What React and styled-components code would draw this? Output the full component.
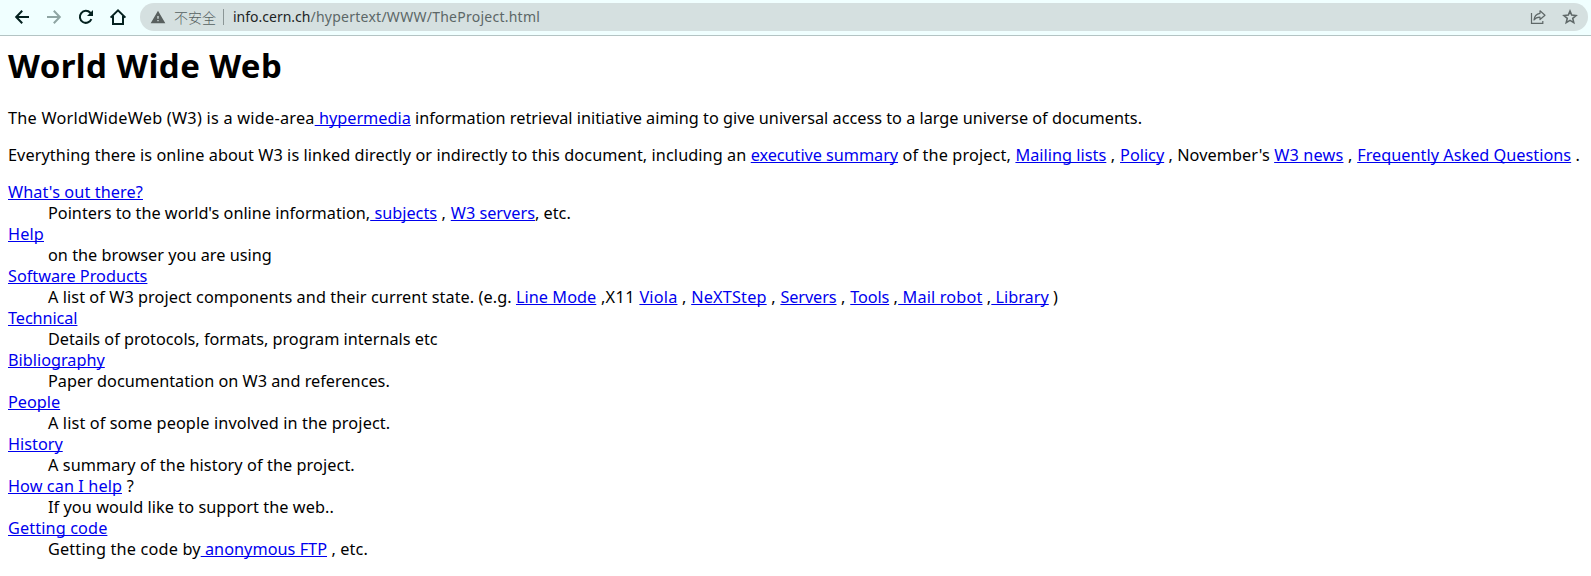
import React from "react";
import styled, { createGlobalStyle } from "styled-components";

const GlobalStyle = createGlobalStyle`
  body {
    margin: 0;
    background: #fff;
    color: #000;
    font-family: "Noto Sans", "Noto Sans CJK SC", sans-serif;
  }
`;

const Window = styled.div`
  height: 576px;
  overflow: hidden;
`;

const Toolbar = styled.header`
  box-sizing: border-box;
  height: 36px;
  display: flex;
  align-items: center;
  gap: 12px;
  padding: 0 3px 1px 12px;
  background: #f0ffff;
  border-bottom: 1px solid #b4c4c4;
`;

const NavIcon = styled.svg`
  flex: none;
  width: 20px;
  height: 20px;
  fill: none;
  stroke: ${(p) => (p.$disabled ? "#8fa5a3" : "#04211f")};
  stroke-width: 2;
`;

const AddressBar = styled.div`
  box-sizing: border-box;
  flex: 1;
  height: 28px;
  display: flex;
  align-items: center;
  padding: 0 10px;
  border-radius: 14px;
  background: #d5e0e0;
  font-size: 14px;
  line-height: 20px;
`;

const BarIcon = styled.svg`
  flex: none;
  width: 16px;
  height: 16px;
  margin-left: ${(p) => p.$before || 0}px;
`;

const Security = styled.span`
  margin-left: 8px;
  color: #566060;
  font-family: "Noto Sans CJK SC", sans-serif;
  font-weight: 300;
`;

const Divider = styled.span`
  width: 1px;
  height: 16px;
  margin: 0 9px 0 7px;
  background: #8b9696;
`;

const Url = styled.span`
  flex: 1;
  color: #1c2424;
`;

const UrlPath = styled.span`
  color: #5c6767;
  letter-spacing: 0.25px;
`;

const Page = styled.main`
  padding: 8px 8px 0;
  font-size: 16.25px;
  line-height: 21px;
  white-space: pre;
`;

const Title = styled.h1`
  margin: 0 0 21px;
  font-size: 33px;
  line-height: 43px;
  font-weight: 700;
  letter-spacing: ${(p) => p.$track}px;
`;

const Paragraph = styled.p`
  margin: 0 0 16px;
`;

const Topics = styled.dl`
  margin: 0;
`;

const Term = styled.dt``;

const Detail = styled.dd`
  margin: 0 0 0 40px;
`;

const Text = styled.span`
  letter-spacing: ${(p) => p.$track || 0}px;
`;

const Link = styled.a`
  color: #0000ee;
  letter-spacing: ${(p) => p.$track || 0}px;
  text-decoration: underline;
  text-decoration-thickness: 1px;
  text-underline-offset: 1px;
  text-decoration-skip-ink: none;
  cursor: pointer;
`;

const Comma = () => <Text $track={0.3}>{" , "}</Text>;

export default function App() {
  return (
    <Window>
      <GlobalStyle />
      <Toolbar>
        <NavIcon viewBox="0 0 20 20">
          <path d="M17 10H4.5M10.2 3.8L4.2 10l6 6.2" />
        </NavIcon>
        <NavIcon viewBox="0 0 20 20" $disabled>
          <path d="M3 10h12.5M9.8 3.8l6 6.2-6 6.2" />
        </NavIcon>
        <NavIcon viewBox="0 0 20 20">
          <path d="M15.4 12.2A6 6 0 1 1 14.3 5.8L15.6 7.1" />
          <path d="M17 3v6h-6z" fill="#04211f" stroke="none" />
        </NavIcon>
        <NavIcon viewBox="0 0 20 20">
          <path d="M2.6 10.6L10 3.3l7.4 7.3M5 9v8h10V9" />
        </NavIcon>
        <AddressBar>
          <BarIcon viewBox="0 0 24 24">
            <path d="M1 21.5h22L12 2.5 1 21.5zm12-3h-2v-2h2v2zm0-4h-2v-4h2v4z" fill="#59605f" />
          </BarIcon>
          <Security>不安全</Security>
          <Divider />
          <Url>
            info.cern.ch<UrlPath>/hypertext/WWW/TheProject.html</UrlPath>
          </Url>
          <BarIcon viewBox="0 0 16 16" fill="none" stroke="#5f6868" strokeWidth="1.2">
            <path d="M1.5 4v10.4h11.3V12" />
            <path d="M10 1.8l5 4.4-5 4.3V8.2C7.3 8.2 5.3 9 4 11c.3-3.6 2.3-6.2 6-6.7z" strokeLinejoin="round" />
          </BarIcon>
          <BarIcon viewBox="0 0 16 16" $before={16} fill="none" stroke="#5f6868" strokeWidth="1.6">
            <path d="M8 2.1l1.7 4 4.3.4-3.25 2.85 1 4.25L8 11.35 4.25 13.6l1-4.25L2 6.5l4.3-.4z" />
          </BarIcon>
        </AddressBar>
      </Toolbar>
      <Page>
        <Title $track={0.4}>World Wide Web</Title>
        <Paragraph>
          <Text $track={0.25}>The WorldWideWeb (W3) is a wide-area</Text>
          <Link>{" hypermedia"}</Link>
          <Text>{" information retrieval initiative aiming to give universal access to a large universe of documents."}</Text>
        </Paragraph>
        <Paragraph>
          <Text $track={0.079}>{"Everything there is online about W3 is linked directly or indirectly to this document, including an "}</Text>
          <Link $track={-0.05}>executive summary</Link>
          <Text $track={0.14}>{" of the project, "}</Text>
          <Link $track={0.03}>Mailing lists</Link>
          <Comma />
          <Link>Policy</Link>
          <Text $track={0.07}>{" , November's "}</Text>
          <Link $track={0.18}>W3 news</Link>
          <Comma />
          <Link $track={0.02}>Frequently Asked Questions</Link>
          <Text>{" ."}</Text>
        </Paragraph>
        <Topics>
          <Term><Link $track={0.1}>What's out there?</Link></Term>
          <Detail>
            <Text>Pointers to the world's online information,</Text>
            <Link>{" subjects"}</Link>
            <Comma />
            <Link>W3 servers</Link>
            <Text>, etc.</Text>
          </Detail>
          <Term><Link $track={0.15}>Help</Link></Term>
          <Detail><Text $track={0.02}>on the browser you are using</Text></Detail>
          <Term><Link>Software Products</Link></Term>
          <Detail>
            <Text $track={0.07}>{"A list of W3 project components and their current state. (e.g. "}</Text>
            <Link $track={0.05}>Line Mode</Link>
            <Text $track={0.36}>{" ,X11 "}</Text>
            <Link $track={0.2}>Viola</Link>
            <Comma />
            <Link $track={0.18}>NeXTStep</Link>
            <Comma />
            <Link $track={-0.08}>Servers</Link>
            <Comma />
            <Link $track={-0.12}>Tools</Link>
            <Text $track={0.2}>{" ,"}</Text>
            <Link $track={0.16}>{" Mail robot"}</Link>
            <Text $track={0.1}>{" ,"}</Text>
            <Link>{" Library"}</Link>
            <Text>{" )"}</Text>
          </Detail>
          <Term><Link $track={-0.09}>Technical</Link></Term>
          <Detail><Text $track={-0.01}>Details of protocols, formats, program internals etc</Text></Detail>
          <Term><Link>Bibliography</Link></Term>
          <Detail><Text $track={0.01}>Paper documentation on W3 and references.</Text></Detail>
          <Term><Link>People</Link></Term>
          <Detail><Text $track={0.12}>A list of some people involved in the project.</Text></Detail>
          <Term><Link>History</Link></Term>
          <Detail><Text $track={0.08}>A summary of the history of the project.</Text></Detail>
          <Term>
            <Link $track={0.08}>How can I help</Link>
            <Text $track={0.5}>{" ?"}</Text>
          </Term>
          <Detail><Text $track={0.06}>If you would like to support the web..</Text></Detail>
          <Term><Link $track={0.12}>Getting code</Link></Term>
          <Detail>
            <Text $track={0.17}>Getting the code by</Text>
            <Link $track={0.03}>{" anonymous FTP"}</Link>
            <Text $track={0.15}>{" , etc."}</Text>
          </Detail>
        </Topics>
      </Page>
    </Window>
  );
}
